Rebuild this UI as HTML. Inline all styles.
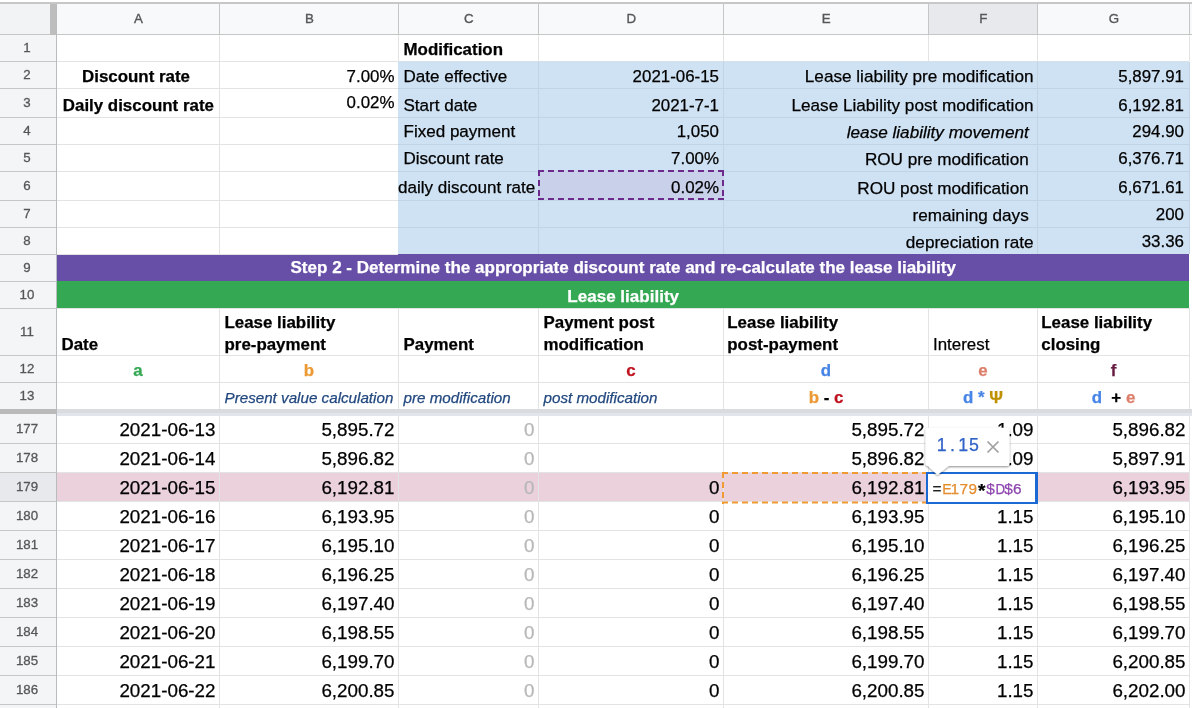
<!DOCTYPE html>
<html><head><meta charset="utf-8"><style>
html,body{margin:0;padding:0;}
body{width:1192px;height:708px;overflow:hidden;position:relative;background:#fff;font-family:"Liberation Sans", sans-serif;}
.t{position:absolute;white-space:pre;-webkit-text-stroke:0.25px currentColor;}
</style></head><body><div style="position:absolute;left:0;top:0;width:1192px;height:708px;overflow:hidden;will-change:transform;">
<div style="position:absolute;left:0px;top:2px;width:1192px;height:2px;background:#c7c7c7;"></div>
<div style="position:absolute;left:0px;top:4px;width:1192px;height:30px;background:#f8f9fa;"></div>
<div style="position:absolute;left:928px;top:4px;width:109px;height:30px;background:#e7e9ec;"></div>
<div style="position:absolute;left:0px;top:4px;width:50px;height:30px;background:#f2f3f4;"></div>
<div style="position:absolute;left:0px;top:35px;width:56px;height:673px;background:#f4f5f6;"></div>
<div style="position:absolute;left:0px;top:472px;width:56px;height:29px;background:#e7e9ec;"></div>
<div style="position:absolute;left:398px;top:62px;width:791px;height:192px;background:#cfe2f3;"></div>
<div style="position:absolute;left:57px;top:254px;width:1132px;height:27px;background:#674ea7;"></div>
<div style="position:absolute;left:57px;top:281px;width:1132px;height:27px;background:#34a853;"></div>
<div style="position:absolute;left:57px;top:472px;width:1132px;height:29px;background:#ead1dc;"></div>
<div style="position:absolute;left:57px;top:61px;width:341px;height:1px;background:#e2e3e3;"></div>
<div style="position:absolute;left:398px;top:61px;width:791px;height:1px;background:#d5dfe8;"></div>
<div style="position:absolute;left:57px;top:88px;width:341px;height:1px;background:#e2e3e3;"></div>
<div style="position:absolute;left:398px;top:88px;width:791px;height:1px;background:#c2d3e3;"></div>
<div style="position:absolute;left:57px;top:117px;width:341px;height:1px;background:#e2e3e3;"></div>
<div style="position:absolute;left:398px;top:117px;width:791px;height:1px;background:#c2d3e3;"></div>
<div style="position:absolute;left:57px;top:144px;width:341px;height:1px;background:#e2e3e3;"></div>
<div style="position:absolute;left:398px;top:144px;width:791px;height:1px;background:#c2d3e3;"></div>
<div style="position:absolute;left:57px;top:171px;width:341px;height:1px;background:#e2e3e3;"></div>
<div style="position:absolute;left:398px;top:171px;width:791px;height:1px;background:#c2d3e3;"></div>
<div style="position:absolute;left:57px;top:200px;width:341px;height:1px;background:#e2e3e3;"></div>
<div style="position:absolute;left:398px;top:200px;width:791px;height:1px;background:#c2d3e3;"></div>
<div style="position:absolute;left:57px;top:227px;width:341px;height:1px;background:#e2e3e3;"></div>
<div style="position:absolute;left:398px;top:227px;width:791px;height:1px;background:#c2d3e3;"></div>
<div style="position:absolute;left:57px;top:308px;width:1132px;height:1px;background:#e2e3e3;"></div>
<div style="position:absolute;left:57px;top:355px;width:1132px;height:1px;background:#e2e3e3;"></div>
<div style="position:absolute;left:57px;top:382px;width:1132px;height:1px;background:#e2e3e3;"></div>
<div style="position:absolute;left:57px;top:409px;width:1132px;height:1px;background:#e2e3e3;"></div>
<div style="position:absolute;left:57px;top:443px;width:1132px;height:1px;background:#e2e3e3;"></div>
<div style="position:absolute;left:57px;top:472px;width:1132px;height:1px;background:#e2e3e3;"></div>
<div style="position:absolute;left:57px;top:501px;width:1132px;height:1px;background:#e2e3e3;"></div>
<div style="position:absolute;left:57px;top:530px;width:1132px;height:1px;background:#e2e3e3;"></div>
<div style="position:absolute;left:57px;top:559px;width:1132px;height:1px;background:#e2e3e3;"></div>
<div style="position:absolute;left:57px;top:588px;width:1132px;height:1px;background:#e2e3e3;"></div>
<div style="position:absolute;left:57px;top:617px;width:1132px;height:1px;background:#e2e3e3;"></div>
<div style="position:absolute;left:57px;top:646px;width:1132px;height:1px;background:#e2e3e3;"></div>
<div style="position:absolute;left:57px;top:675px;width:1132px;height:1px;background:#e2e3e3;"></div>
<div style="position:absolute;left:57px;top:704px;width:1132px;height:1px;background:#e2e3e3;"></div>
<div style="position:absolute;left:57px;top:254px;width:341px;height:1px;background:#e2e3e3;"></div>
<div style="position:absolute;left:219px;top:35px;width:1px;height:219px;background:#e2e3e3;"></div>
<div style="position:absolute;left:219px;top:308px;width:1px;height:101px;background:#e2e3e3;"></div>
<div style="position:absolute;left:219px;top:414px;width:1px;height:294px;background:#e2e3e3;"></div>
<div style="position:absolute;left:398px;top:35px;width:1px;height:27px;background:#e2e3e3;"></div>
<div style="position:absolute;left:398px;top:308px;width:1px;height:101px;background:#e2e3e3;"></div>
<div style="position:absolute;left:398px;top:414px;width:1px;height:294px;background:#e2e3e3;"></div>
<div style="position:absolute;left:538px;top:35px;width:1px;height:26px;background:#e2e3e3;"></div>
<div style="position:absolute;left:538px;top:62px;width:1px;height:192px;background:#c2d3e3;"></div>
<div style="position:absolute;left:538px;top:308px;width:1px;height:101px;background:#e2e3e3;"></div>
<div style="position:absolute;left:538px;top:414px;width:1px;height:294px;background:#e2e3e3;"></div>
<div style="position:absolute;left:723px;top:35px;width:1px;height:26px;background:#e2e3e3;"></div>
<div style="position:absolute;left:723px;top:62px;width:1px;height:192px;background:#c2d3e3;"></div>
<div style="position:absolute;left:723px;top:308px;width:1px;height:101px;background:#e2e3e3;"></div>
<div style="position:absolute;left:723px;top:414px;width:1px;height:294px;background:#e2e3e3;"></div>
<div style="position:absolute;left:928px;top:35px;width:1px;height:26px;background:#e2e3e3;"></div>
<div style="position:absolute;left:928px;top:308px;width:1px;height:101px;background:#e2e3e3;"></div>
<div style="position:absolute;left:928px;top:414px;width:1px;height:294px;background:#e2e3e3;"></div>
<div style="position:absolute;left:1037px;top:35px;width:1px;height:26px;background:#e2e3e3;"></div>
<div style="position:absolute;left:1037px;top:62px;width:1px;height:192px;background:#c2d3e3;"></div>
<div style="position:absolute;left:1037px;top:308px;width:1px;height:101px;background:#e2e3e3;"></div>
<div style="position:absolute;left:1037px;top:414px;width:1px;height:294px;background:#e2e3e3;"></div>
<div style="position:absolute;left:1189px;top:35px;width:1px;height:26px;background:#e2e3e3;"></div>
<div style="position:absolute;left:1189px;top:62px;width:1px;height:192px;background:#c2d3e3;"></div>
<div style="position:absolute;left:1189px;top:308px;width:1px;height:101px;background:#e2e3e3;"></div>
<div style="position:absolute;left:1189px;top:414px;width:1px;height:294px;background:#e2e3e3;"></div>
<div style="position:absolute;left:0px;top:34px;width:1192px;height:1px;background:#c4c7c5;"></div>
<div style="position:absolute;left:219px;top:4px;width:1px;height:30px;background:#c4c7c5;"></div>
<div style="position:absolute;left:398px;top:4px;width:1px;height:30px;background:#c4c7c5;"></div>
<div style="position:absolute;left:538px;top:4px;width:1px;height:30px;background:#c4c7c5;"></div>
<div style="position:absolute;left:723px;top:4px;width:1px;height:30px;background:#c4c7c5;"></div>
<div style="position:absolute;left:928px;top:4px;width:1px;height:30px;background:#c4c7c5;"></div>
<div style="position:absolute;left:1037px;top:4px;width:1px;height:30px;background:#c4c7c5;"></div>
<div style="position:absolute;left:1189px;top:4px;width:1px;height:30px;background:#c4c7c5;"></div>
<div style="position:absolute;left:0px;top:61px;width:56px;height:1px;background:#c4c7c5;"></div>
<div style="position:absolute;left:0px;top:88px;width:56px;height:1px;background:#c4c7c5;"></div>
<div style="position:absolute;left:0px;top:117px;width:56px;height:1px;background:#c4c7c5;"></div>
<div style="position:absolute;left:0px;top:144px;width:56px;height:1px;background:#c4c7c5;"></div>
<div style="position:absolute;left:0px;top:171px;width:56px;height:1px;background:#c4c7c5;"></div>
<div style="position:absolute;left:0px;top:200px;width:56px;height:1px;background:#c4c7c5;"></div>
<div style="position:absolute;left:0px;top:227px;width:56px;height:1px;background:#c4c7c5;"></div>
<div style="position:absolute;left:0px;top:254px;width:56px;height:1px;background:#c4c7c5;"></div>
<div style="position:absolute;left:0px;top:281px;width:56px;height:1px;background:#c4c7c5;"></div>
<div style="position:absolute;left:0px;top:308px;width:56px;height:1px;background:#c4c7c5;"></div>
<div style="position:absolute;left:0px;top:355px;width:56px;height:1px;background:#c4c7c5;"></div>
<div style="position:absolute;left:0px;top:382px;width:56px;height:1px;background:#c4c7c5;"></div>
<div style="position:absolute;left:0px;top:409px;width:56px;height:1px;background:#c4c7c5;"></div>
<div style="position:absolute;left:0px;top:443px;width:56px;height:1px;background:#c4c7c5;"></div>
<div style="position:absolute;left:0px;top:472px;width:56px;height:1px;background:#c4c7c5;"></div>
<div style="position:absolute;left:0px;top:501px;width:56px;height:1px;background:#c4c7c5;"></div>
<div style="position:absolute;left:0px;top:530px;width:56px;height:1px;background:#c4c7c5;"></div>
<div style="position:absolute;left:0px;top:559px;width:56px;height:1px;background:#c4c7c5;"></div>
<div style="position:absolute;left:0px;top:588px;width:56px;height:1px;background:#c4c7c5;"></div>
<div style="position:absolute;left:0px;top:617px;width:56px;height:1px;background:#c4c7c5;"></div>
<div style="position:absolute;left:0px;top:646px;width:56px;height:1px;background:#c4c7c5;"></div>
<div style="position:absolute;left:0px;top:675px;width:56px;height:1px;background:#c4c7c5;"></div>
<div style="position:absolute;left:0px;top:704px;width:56px;height:1px;background:#c4c7c5;"></div>
<div style="position:absolute;left:56px;top:4px;width:1px;height:704px;background:#b9bcbf;"></div>
<div style="position:absolute;left:50px;top:4px;width:6px;height:31px;background:#bdbdbd;"></div>
<div style="position:absolute;left:0px;top:409px;width:56px;height:5px;background:#bababa;"></div>
<div style="position:absolute;left:57px;top:409px;width:1135px;height:4px;background:#d9dbde;"></div>
<div style="position:absolute;left:57px;top:413px;width:1135px;height:3px;background:#e2e5eb;"></div>
<div class="t" style="left:-261.7px;width:800px;text-align:center;top:5.89px;line-height:26.6px;font-size:13.3px;font-weight:normal;font-style:normal;color:#555759;-webkit-text-stroke:0.35px #555759;">A</div>
<div class="t" style="left:-90.7px;width:800px;text-align:center;top:5.89px;line-height:26.6px;font-size:13.3px;font-weight:normal;font-style:normal;color:#555759;-webkit-text-stroke:0.35px #555759;">B</div>
<div class="t" style="left:68.8px;width:800px;text-align:center;top:5.89px;line-height:26.6px;font-size:13.3px;font-weight:normal;font-style:normal;color:#555759;-webkit-text-stroke:0.35px #555759;">C</div>
<div class="t" style="left:231.3px;width:800px;text-align:center;top:5.89px;line-height:26.6px;font-size:13.3px;font-weight:normal;font-style:normal;color:#555759;-webkit-text-stroke:0.35px #555759;">D</div>
<div class="t" style="left:426.3px;width:800px;text-align:center;top:5.89px;line-height:26.6px;font-size:13.3px;font-weight:normal;font-style:normal;color:#555759;-webkit-text-stroke:0.35px #555759;">E</div>
<div class="t" style="left:583.3px;width:800px;text-align:center;top:5.89px;line-height:26.6px;font-size:13.3px;font-weight:normal;font-style:normal;color:#555759;-webkit-text-stroke:0.35px #555759;">F</div>
<div class="t" style="left:713.8px;width:800px;text-align:center;top:5.89px;line-height:26.6px;font-size:13.3px;font-weight:normal;font-style:normal;color:#555759;-webkit-text-stroke:0.35px #555759;">G</div>
<div class="t" style="left:-373px;width:800px;text-align:center;top:35.19px;line-height:26.6px;font-size:13.3px;font-weight:normal;font-style:normal;color:#555759;-webkit-text-stroke:0.3px #555759;">1</div>
<div class="t" style="left:-373px;width:800px;text-align:center;top:62.19px;line-height:26.6px;font-size:13.3px;font-weight:normal;font-style:normal;color:#555759;-webkit-text-stroke:0.3px #555759;">2</div>
<div class="t" style="left:-373px;width:800px;text-align:center;top:90.19px;line-height:26.6px;font-size:13.3px;font-weight:normal;font-style:normal;color:#555759;-webkit-text-stroke:0.3px #555759;">3</div>
<div class="t" style="left:-373px;width:800px;text-align:center;top:118.19px;line-height:26.6px;font-size:13.3px;font-weight:normal;font-style:normal;color:#555759;-webkit-text-stroke:0.3px #555759;">4</div>
<div class="t" style="left:-373px;width:800px;text-align:center;top:145.19px;line-height:26.6px;font-size:13.3px;font-weight:normal;font-style:normal;color:#555759;-webkit-text-stroke:0.3px #555759;">5</div>
<div class="t" style="left:-373px;width:800px;text-align:center;top:173.19px;line-height:26.6px;font-size:13.3px;font-weight:normal;font-style:normal;color:#555759;-webkit-text-stroke:0.3px #555759;">6</div>
<div class="t" style="left:-373px;width:800px;text-align:center;top:201.19px;line-height:26.6px;font-size:13.3px;font-weight:normal;font-style:normal;color:#555759;-webkit-text-stroke:0.3px #555759;">7</div>
<div class="t" style="left:-373px;width:800px;text-align:center;top:228.19px;line-height:26.6px;font-size:13.3px;font-weight:normal;font-style:normal;color:#555759;-webkit-text-stroke:0.3px #555759;">8</div>
<div class="t" style="left:-373px;width:800px;text-align:center;top:254.69px;line-height:26.6px;font-size:13.3px;font-weight:normal;font-style:normal;color:#555759;-webkit-text-stroke:0.3px #555759;">9</div>
<div class="t" style="left:-373px;width:800px;text-align:center;top:281.69px;line-height:26.6px;font-size:13.3px;font-weight:normal;font-style:normal;color:#555759;-webkit-text-stroke:0.3px #555759;">10</div>
<div class="t" style="left:-373px;width:800px;text-align:center;top:319.19px;line-height:26.6px;font-size:13.3px;font-weight:normal;font-style:normal;color:#555759;-webkit-text-stroke:0.3px #555759;">11</div>
<div class="t" style="left:-373px;width:800px;text-align:center;top:356.19px;line-height:26.6px;font-size:13.3px;font-weight:normal;font-style:normal;color:#555759;-webkit-text-stroke:0.3px #555759;">12</div>
<div class="t" style="left:-373px;width:800px;text-align:center;top:383.19px;line-height:26.6px;font-size:13.3px;font-weight:normal;font-style:normal;color:#555759;-webkit-text-stroke:0.3px #555759;">13</div>
<div class="t" style="left:-373px;width:800px;text-align:center;top:415.69px;line-height:26.6px;font-size:13.3px;font-weight:normal;font-style:normal;color:#555759;-webkit-text-stroke:0.3px #555759;">177</div>
<div class="t" style="left:-373px;width:800px;text-align:center;top:444.69px;line-height:26.6px;font-size:13.3px;font-weight:normal;font-style:normal;color:#555759;-webkit-text-stroke:0.3px #555759;">178</div>
<div class="t" style="left:-373px;width:800px;text-align:center;top:473.69px;line-height:26.6px;font-size:13.3px;font-weight:normal;font-style:normal;color:#555759;-webkit-text-stroke:0.3px #555759;">179</div>
<div class="t" style="left:-373px;width:800px;text-align:center;top:502.69px;line-height:26.6px;font-size:13.3px;font-weight:normal;font-style:normal;color:#555759;-webkit-text-stroke:0.3px #555759;">180</div>
<div class="t" style="left:-373px;width:800px;text-align:center;top:531.69px;line-height:26.6px;font-size:13.3px;font-weight:normal;font-style:normal;color:#555759;-webkit-text-stroke:0.3px #555759;">181</div>
<div class="t" style="left:-373px;width:800px;text-align:center;top:560.69px;line-height:26.6px;font-size:13.3px;font-weight:normal;font-style:normal;color:#555759;-webkit-text-stroke:0.3px #555759;">182</div>
<div class="t" style="left:-373px;width:800px;text-align:center;top:589.69px;line-height:26.6px;font-size:13.3px;font-weight:normal;font-style:normal;color:#555759;-webkit-text-stroke:0.3px #555759;">183</div>
<div class="t" style="left:-373px;width:800px;text-align:center;top:618.69px;line-height:26.6px;font-size:13.3px;font-weight:normal;font-style:normal;color:#555759;-webkit-text-stroke:0.3px #555759;">184</div>
<div class="t" style="left:-373px;width:800px;text-align:center;top:647.69px;line-height:26.6px;font-size:13.3px;font-weight:normal;font-style:normal;color:#555759;-webkit-text-stroke:0.3px #555759;">185</div>
<div class="t" style="left:-373px;width:800px;text-align:center;top:676.69px;line-height:26.6px;font-size:13.3px;font-weight:normal;font-style:normal;color:#555759;-webkit-text-stroke:0.3px #555759;">186</div>
<div class="t" style="left:403.5px;top:32.74px;line-height:33.8px;font-size:16.9px;font-weight:bold;font-style:normal;color:#000;">Modification</div>
<div class="t" style="left:82px;top:59.74px;line-height:33.8px;font-size:16.9px;font-weight:bold;font-style:normal;color:#000;">Discount rate</div>
<div class="t" style="left:62.8px;top:88.74px;line-height:33.8px;font-size:16.9px;font-weight:bold;font-style:normal;color:#000;">Daily discount rate</div>
<div class="t" style="right:797.5px;top:59.74px;line-height:33.8px;font-size:16.9px;font-weight:normal;font-style:normal;color:#000;">7.00%</div>
<div class="t" style="right:797.5px;top:86.24px;line-height:33.8px;font-size:16.9px;font-weight:normal;font-style:normal;color:#000;">0.02%</div>
<div class="t" style="left:403.5px;top:59.54px;line-height:34.1px;font-size:17.05px;font-weight:normal;font-style:normal;color:#000;">Date effective</div>
<div class="t" style="left:403.5px;top:88.54px;line-height:34.1px;font-size:17.05px;font-weight:normal;font-style:normal;color:#000;">Start date</div>
<div class="t" style="left:403.5px;top:114.74px;line-height:34.1px;font-size:17.05px;font-weight:normal;font-style:normal;color:#000;">Fixed payment</div>
<div class="t" style="left:403.5px;top:141.74px;line-height:34.1px;font-size:17.05px;font-weight:normal;font-style:normal;color:#000;">Discount rate</div>
<div class="t" style="left:398px;top:170.74px;line-height:34.1px;font-size:17.05px;font-weight:normal;font-style:normal;color:#000;">daily discount rate</div>
<div class="t" style="right:473px;top:59.74px;line-height:33.8px;font-size:16.9px;font-weight:normal;font-style:normal;color:#000;">2021-06-15</div>
<div class="t" style="right:473px;top:88.74px;line-height:33.8px;font-size:16.9px;font-weight:normal;font-style:normal;color:#000;">2021-7-1</div>
<div class="t" style="right:473px;top:114.94px;line-height:33.8px;font-size:16.9px;font-weight:normal;font-style:normal;color:#000;">1,050</div>
<div class="t" style="right:473px;top:141.94px;line-height:33.8px;font-size:16.9px;font-weight:normal;font-style:normal;color:#000;">7.00%</div>
<div class="t" style="right:158.5px;top:59.41px;line-height:34.3px;font-size:17.15px;font-weight:normal;font-style:normal;color:#000;">Lease liability pre modification</div>
<div class="t" style="right:158.5px;top:88.41px;line-height:34.3px;font-size:17.15px;font-weight:normal;font-style:normal;color:#000;">Lease Liability post modification</div>
<div class="t" style="right:158.5px;top:114.61px;line-height:34.3px;font-size:17.15px;font-weight:normal;font-style:italic;color:#000;">lease liability movement </div>
<div class="t" style="right:158.5px;top:141.61px;line-height:34.3px;font-size:17.15px;font-weight:normal;font-style:normal;color:#000;">ROU pre modification </div>
<div class="t" style="right:158.5px;top:170.61px;line-height:34.3px;font-size:17.15px;font-weight:normal;font-style:normal;color:#000;">ROU post modification </div>
<div class="t" style="right:158.5px;top:197.61px;line-height:34.3px;font-size:17.15px;font-weight:normal;font-style:normal;color:#000;">remaining days </div>
<div class="t" style="right:158.5px;top:224.61px;line-height:34.3px;font-size:17.15px;font-weight:normal;font-style:normal;color:#000;">depreciation rate</div>
<div class="t" style="right:8px;top:59.74px;line-height:33.8px;font-size:16.9px;font-weight:normal;font-style:normal;color:#000;">5,897.91</div>
<div class="t" style="right:8px;top:88.74px;line-height:33.8px;font-size:16.9px;font-weight:normal;font-style:normal;color:#000;">6,192.81</div>
<div class="t" style="right:8px;top:114.94px;line-height:33.8px;font-size:16.9px;font-weight:normal;font-style:normal;color:#000;">294.90</div>
<div class="t" style="right:8px;top:141.94px;line-height:33.8px;font-size:16.9px;font-weight:normal;font-style:normal;color:#000;">6,376.71</div>
<div class="t" style="right:8px;top:170.94px;line-height:33.8px;font-size:16.9px;font-weight:normal;font-style:normal;color:#000;">6,671.61</div>
<div class="t" style="right:8px;top:197.94px;line-height:33.8px;font-size:16.9px;font-weight:normal;font-style:normal;color:#000;">200</div>
<div class="t" style="right:8px;top:224.94px;line-height:33.8px;font-size:16.9px;font-weight:normal;font-style:normal;color:#000;">33.36</div>
<div style="position:absolute;left:538px;top:170px;width:186px;height:30px;background:#c9d0ea;"></div>
<div class="t" style="right:473px;top:170.94px;line-height:33.8px;font-size:16.9px;font-weight:normal;font-style:normal;color:#000;">0.02%</div>
<svg style="position:absolute;left:538px;top:170px" width="186" height="30" viewBox="0 0 186 30">
<g stroke="#6b2a8c" stroke-width="2" fill="none">
<path d="M0 1 H186" stroke-dasharray="6 4"/><path d="M0 29 H186" stroke-dasharray="6 4"/>
<path d="M1 0 V30" stroke-dasharray="6 4"/><path d="M185 0 V30" stroke-dasharray="6 4"/>
</g></svg>
<div class="t" style="left:223.2px;width:800px;text-align:center;top:251.34px;line-height:34.1px;font-size:17.05px;font-weight:bold;font-style:normal;color:#fff;">Step 2 - Determine the appropriate discount rate and re-calculate the lease liability</div>
<div class="t" style="left:223.2px;width:800px;text-align:center;top:280.04px;line-height:34.1px;font-size:17.05px;font-weight:bold;font-style:normal;color:#fff;">Lease liability</div>
<div class="t" style="left:61.5px;top:327.84px;line-height:33.8px;font-size:16.9px;font-weight:bold;font-style:normal;color:#000;">Date</div>
<div class="t" style="left:224.5px;top:306.14px;line-height:33.8px;font-size:16.9px;font-weight:bold;font-style:normal;color:#000;">Lease liability</div>
<div class="t" style="left:224.5px;top:327.84px;line-height:33.8px;font-size:16.9px;font-weight:bold;font-style:normal;color:#000;">pre-payment</div>
<div class="t" style="left:403.5px;top:327.84px;line-height:33.8px;font-size:16.9px;font-weight:bold;font-style:normal;color:#000;">Payment</div>
<div class="t" style="left:543.5px;top:306.14px;line-height:33.8px;font-size:16.9px;font-weight:bold;font-style:normal;color:#000;">Payment post</div>
<div class="t" style="left:543.5px;top:327.84px;line-height:33.8px;font-size:16.9px;font-weight:bold;font-style:normal;color:#000;">modification</div>
<div class="t" style="left:727.3px;top:306.14px;line-height:33.8px;font-size:16.9px;font-weight:bold;font-style:normal;color:#000;">Lease liability</div>
<div class="t" style="left:727.3px;top:327.84px;line-height:33.8px;font-size:16.9px;font-weight:bold;font-style:normal;color:#000;">post-payment</div>
<div class="t" style="left:933px;top:327.84px;line-height:33.8px;font-size:16.9px;font-weight:normal;font-style:normal;color:#000;">Interest</div>
<div class="t" style="left:1041.3px;top:306.14px;line-height:33.8px;font-size:16.9px;font-weight:bold;font-style:normal;color:#000;">Lease liability</div>
<div class="t" style="left:1041.3px;top:327.84px;line-height:33.8px;font-size:16.9px;font-weight:bold;font-style:normal;color:#000;">closing</div>
<div class="t" style="left:-262.0px;width:800px;text-align:center;top:354.04px;line-height:33.8px;font-size:16.9px;font-weight:bold;font-style:normal;color:#34a853;">a</div>
<div class="t" style="left:-91.0px;width:800px;text-align:center;top:354.04px;line-height:33.8px;font-size:16.9px;font-weight:bold;font-style:normal;color:#ec9a35;">b</div>
<div class="t" style="left:231.0px;width:800px;text-align:center;top:354.04px;line-height:33.8px;font-size:16.9px;font-weight:bold;font-style:normal;color:#c0111f;">c</div>
<div class="t" style="left:426.0px;width:800px;text-align:center;top:354.04px;line-height:33.8px;font-size:16.9px;font-weight:bold;font-style:normal;color:#4684e6;">d</div>
<div class="t" style="left:583.0px;width:800px;text-align:center;top:354.04px;line-height:33.8px;font-size:16.9px;font-weight:bold;font-style:normal;color:#dd7e6b;">e</div>
<div class="t" style="left:713.5px;width:800px;text-align:center;top:354.04px;line-height:33.8px;font-size:16.9px;font-weight:bold;font-style:normal;color:#66193f;">f</div>
<div class="t" style="left:224.5px;top:383.33px;line-height:30.4px;font-size:15.2px;font-weight:normal;font-style:italic;color:#22487f;">Present value calculation</div>
<div class="t" style="left:403.5px;top:383.33px;line-height:30.4px;font-size:15.2px;font-weight:normal;font-style:italic;color:#22487f;">pre modification</div>
<div class="t" style="left:543.5px;top:383.33px;line-height:30.4px;font-size:15.2px;font-weight:normal;font-style:italic;color:#22487f;">post modification</div>
<div class="t" style="left:426.0px;width:800px;text-align:center;top:381.04px;line-height:33.8px;font-size:16.9px;font-weight:bold;font-style:normal;color:#000;"><span style="color:#ec9a35">b</span> - <span style="color:#c0111f">c</span></div>
<div class="t" style="left:583.0px;width:800px;text-align:center;top:381.04px;line-height:33.8px;font-size:16.9px;font-weight:bold;font-style:normal;color:#000;"><span style="color:#4684e6">d * </span><span style="color:#bf9000">&Psi;</span></div>
<div class="t" style="left:713.5px;width:800px;text-align:center;top:381.04px;line-height:33.8px;font-size:16.9px;font-weight:bold;font-style:normal;color:#000;"><span style="color:#4684e6">d</span>  + <span style="color:#dd7e6b">e</span></div>
<div class="t" style="right:976.5px;top:411.39px;line-height:37.6px;font-size:18.8px;font-weight:normal;font-style:normal;color:#000;">2021-06-13</div>
<div class="t" style="right:797.5px;top:411.39px;line-height:37.6px;font-size:18.8px;font-weight:normal;font-style:normal;color:#000;">5,895.72</div>
<div class="t" style="right:657.5px;top:411.39px;line-height:37.6px;font-size:18.8px;font-weight:normal;font-style:normal;color:#b7b7b7;">0</div>
<div class="t" style="right:267.5px;top:411.39px;line-height:37.6px;font-size:18.8px;font-weight:normal;font-style:normal;color:#000;">5,895.72</div>
<div class="t" style="right:158.5px;top:411.39px;line-height:37.6px;font-size:18.8px;font-weight:normal;font-style:normal;color:#000;">1.09</div>
<div class="t" style="right:6.5px;top:411.39px;line-height:37.6px;font-size:18.8px;font-weight:normal;font-style:normal;color:#000;">5,896.82</div>
<div class="t" style="right:976.5px;top:440.39px;line-height:37.6px;font-size:18.8px;font-weight:normal;font-style:normal;color:#000;">2021-06-14</div>
<div class="t" style="right:797.5px;top:440.39px;line-height:37.6px;font-size:18.8px;font-weight:normal;font-style:normal;color:#000;">5,896.82</div>
<div class="t" style="right:657.5px;top:440.39px;line-height:37.6px;font-size:18.8px;font-weight:normal;font-style:normal;color:#b7b7b7;">0</div>
<div class="t" style="right:267.5px;top:440.39px;line-height:37.6px;font-size:18.8px;font-weight:normal;font-style:normal;color:#000;">5,896.82</div>
<div class="t" style="right:158.5px;top:440.39px;line-height:37.6px;font-size:18.8px;font-weight:normal;font-style:normal;color:#000;">1.09</div>
<div class="t" style="right:6.5px;top:440.39px;line-height:37.6px;font-size:18.8px;font-weight:normal;font-style:normal;color:#000;">5,897.91</div>
<div class="t" style="right:976.5px;top:469.39px;line-height:37.6px;font-size:18.8px;font-weight:normal;font-style:normal;color:#000;">2021-06-15</div>
<div class="t" style="right:797.5px;top:469.39px;line-height:37.6px;font-size:18.8px;font-weight:normal;font-style:normal;color:#000;">6,192.81</div>
<div class="t" style="right:657.5px;top:469.39px;line-height:37.6px;font-size:18.8px;font-weight:normal;font-style:normal;color:#b7b7b7;">0</div>
<div class="t" style="right:472.5px;top:469.39px;line-height:37.6px;font-size:18.8px;font-weight:normal;font-style:normal;color:#000;">0</div>
<div class="t" style="right:267.5px;top:469.39px;line-height:37.6px;font-size:18.8px;font-weight:normal;font-style:normal;color:#000;">6,192.81</div>
<div class="t" style="right:6.5px;top:469.39px;line-height:37.6px;font-size:18.8px;font-weight:normal;font-style:normal;color:#000;">6,193.95</div>
<div class="t" style="right:976.5px;top:498.39px;line-height:37.6px;font-size:18.8px;font-weight:normal;font-style:normal;color:#000;">2021-06-16</div>
<div class="t" style="right:797.5px;top:498.39px;line-height:37.6px;font-size:18.8px;font-weight:normal;font-style:normal;color:#000;">6,193.95</div>
<div class="t" style="right:657.5px;top:498.39px;line-height:37.6px;font-size:18.8px;font-weight:normal;font-style:normal;color:#b7b7b7;">0</div>
<div class="t" style="right:472.5px;top:498.39px;line-height:37.6px;font-size:18.8px;font-weight:normal;font-style:normal;color:#000;">0</div>
<div class="t" style="right:267.5px;top:498.39px;line-height:37.6px;font-size:18.8px;font-weight:normal;font-style:normal;color:#000;">6,193.95</div>
<div class="t" style="right:158.5px;top:498.39px;line-height:37.6px;font-size:18.8px;font-weight:normal;font-style:normal;color:#000;">1.15</div>
<div class="t" style="right:6.5px;top:498.39px;line-height:37.6px;font-size:18.8px;font-weight:normal;font-style:normal;color:#000;">6,195.10</div>
<div class="t" style="right:976.5px;top:527.39px;line-height:37.6px;font-size:18.8px;font-weight:normal;font-style:normal;color:#000;">2021-06-17</div>
<div class="t" style="right:797.5px;top:527.39px;line-height:37.6px;font-size:18.8px;font-weight:normal;font-style:normal;color:#000;">6,195.10</div>
<div class="t" style="right:657.5px;top:527.39px;line-height:37.6px;font-size:18.8px;font-weight:normal;font-style:normal;color:#b7b7b7;">0</div>
<div class="t" style="right:472.5px;top:527.39px;line-height:37.6px;font-size:18.8px;font-weight:normal;font-style:normal;color:#000;">0</div>
<div class="t" style="right:267.5px;top:527.39px;line-height:37.6px;font-size:18.8px;font-weight:normal;font-style:normal;color:#000;">6,195.10</div>
<div class="t" style="right:158.5px;top:527.39px;line-height:37.6px;font-size:18.8px;font-weight:normal;font-style:normal;color:#000;">1.15</div>
<div class="t" style="right:6.5px;top:527.39px;line-height:37.6px;font-size:18.8px;font-weight:normal;font-style:normal;color:#000;">6,196.25</div>
<div class="t" style="right:976.5px;top:556.39px;line-height:37.6px;font-size:18.8px;font-weight:normal;font-style:normal;color:#000;">2021-06-18</div>
<div class="t" style="right:797.5px;top:556.39px;line-height:37.6px;font-size:18.8px;font-weight:normal;font-style:normal;color:#000;">6,196.25</div>
<div class="t" style="right:657.5px;top:556.39px;line-height:37.6px;font-size:18.8px;font-weight:normal;font-style:normal;color:#b7b7b7;">0</div>
<div class="t" style="right:472.5px;top:556.39px;line-height:37.6px;font-size:18.8px;font-weight:normal;font-style:normal;color:#000;">0</div>
<div class="t" style="right:267.5px;top:556.39px;line-height:37.6px;font-size:18.8px;font-weight:normal;font-style:normal;color:#000;">6,196.25</div>
<div class="t" style="right:158.5px;top:556.39px;line-height:37.6px;font-size:18.8px;font-weight:normal;font-style:normal;color:#000;">1.15</div>
<div class="t" style="right:6.5px;top:556.39px;line-height:37.6px;font-size:18.8px;font-weight:normal;font-style:normal;color:#000;">6,197.40</div>
<div class="t" style="right:976.5px;top:585.39px;line-height:37.6px;font-size:18.8px;font-weight:normal;font-style:normal;color:#000;">2021-06-19</div>
<div class="t" style="right:797.5px;top:585.39px;line-height:37.6px;font-size:18.8px;font-weight:normal;font-style:normal;color:#000;">6,197.40</div>
<div class="t" style="right:657.5px;top:585.39px;line-height:37.6px;font-size:18.8px;font-weight:normal;font-style:normal;color:#b7b7b7;">0</div>
<div class="t" style="right:472.5px;top:585.39px;line-height:37.6px;font-size:18.8px;font-weight:normal;font-style:normal;color:#000;">0</div>
<div class="t" style="right:267.5px;top:585.39px;line-height:37.6px;font-size:18.8px;font-weight:normal;font-style:normal;color:#000;">6,197.40</div>
<div class="t" style="right:158.5px;top:585.39px;line-height:37.6px;font-size:18.8px;font-weight:normal;font-style:normal;color:#000;">1.15</div>
<div class="t" style="right:6.5px;top:585.39px;line-height:37.6px;font-size:18.8px;font-weight:normal;font-style:normal;color:#000;">6,198.55</div>
<div class="t" style="right:976.5px;top:614.39px;line-height:37.6px;font-size:18.8px;font-weight:normal;font-style:normal;color:#000;">2021-06-20</div>
<div class="t" style="right:797.5px;top:614.39px;line-height:37.6px;font-size:18.8px;font-weight:normal;font-style:normal;color:#000;">6,198.55</div>
<div class="t" style="right:657.5px;top:614.39px;line-height:37.6px;font-size:18.8px;font-weight:normal;font-style:normal;color:#b7b7b7;">0</div>
<div class="t" style="right:472.5px;top:614.39px;line-height:37.6px;font-size:18.8px;font-weight:normal;font-style:normal;color:#000;">0</div>
<div class="t" style="right:267.5px;top:614.39px;line-height:37.6px;font-size:18.8px;font-weight:normal;font-style:normal;color:#000;">6,198.55</div>
<div class="t" style="right:158.5px;top:614.39px;line-height:37.6px;font-size:18.8px;font-weight:normal;font-style:normal;color:#000;">1.15</div>
<div class="t" style="right:6.5px;top:614.39px;line-height:37.6px;font-size:18.8px;font-weight:normal;font-style:normal;color:#000;">6,199.70</div>
<div class="t" style="right:976.5px;top:643.39px;line-height:37.6px;font-size:18.8px;font-weight:normal;font-style:normal;color:#000;">2021-06-21</div>
<div class="t" style="right:797.5px;top:643.39px;line-height:37.6px;font-size:18.8px;font-weight:normal;font-style:normal;color:#000;">6,199.70</div>
<div class="t" style="right:657.5px;top:643.39px;line-height:37.6px;font-size:18.8px;font-weight:normal;font-style:normal;color:#b7b7b7;">0</div>
<div class="t" style="right:472.5px;top:643.39px;line-height:37.6px;font-size:18.8px;font-weight:normal;font-style:normal;color:#000;">0</div>
<div class="t" style="right:267.5px;top:643.39px;line-height:37.6px;font-size:18.8px;font-weight:normal;font-style:normal;color:#000;">6,199.70</div>
<div class="t" style="right:158.5px;top:643.39px;line-height:37.6px;font-size:18.8px;font-weight:normal;font-style:normal;color:#000;">1.15</div>
<div class="t" style="right:6.5px;top:643.39px;line-height:37.6px;font-size:18.8px;font-weight:normal;font-style:normal;color:#000;">6,200.85</div>
<div class="t" style="right:976.5px;top:672.39px;line-height:37.6px;font-size:18.8px;font-weight:normal;font-style:normal;color:#000;">2021-06-22</div>
<div class="t" style="right:797.5px;top:672.39px;line-height:37.6px;font-size:18.8px;font-weight:normal;font-style:normal;color:#000;">6,200.85</div>
<div class="t" style="right:657.5px;top:672.39px;line-height:37.6px;font-size:18.8px;font-weight:normal;font-style:normal;color:#b7b7b7;">0</div>
<div class="t" style="right:472.5px;top:672.39px;line-height:37.6px;font-size:18.8px;font-weight:normal;font-style:normal;color:#000;">0</div>
<div class="t" style="right:267.5px;top:672.39px;line-height:37.6px;font-size:18.8px;font-weight:normal;font-style:normal;color:#000;">6,200.85</div>
<div class="t" style="right:158.5px;top:672.39px;line-height:37.6px;font-size:18.8px;font-weight:normal;font-style:normal;color:#000;">1.15</div>
<div class="t" style="right:6.5px;top:672.39px;line-height:37.6px;font-size:18.8px;font-weight:normal;font-style:normal;color:#000;">6,202.00</div>
<svg style="position:absolute;left:722px;top:472px" width="206" height="32" viewBox="0 0 206 32">
<g stroke="#ef9a33" stroke-width="2" fill="none">
<path d="M0 1 H206" stroke-dasharray="6 4"/><path d="M0 30.5 H206" stroke-dasharray="6 4"/>
<path d="M1 0 V32" stroke-dasharray="6 4"/>
</g></svg>
<div style="position:absolute;left:926px;top:472px;width:107px;height:28px;background:#fff;border:2px solid #1b6ad4;border-right-width:3px;"></div>
<div class="t" style="left:932.6px;top:473.26px;line-height:30.8px;font-size:15.4px;font-weight:normal;font-style:normal;color:#000;"><span style="display:inline-block;width:8.93px;text-align:center;color:#222">=</span><span style="display:inline-block;width:8.93px;text-align:center;color:#e58c2c;transform:scaleX(0.92)">E</span><span style="display:inline-block;width:8.93px;text-align:center;color:#e58c2c">1</span><span style="display:inline-block;width:8.93px;text-align:center;color:#e58c2c">7</span><span style="display:inline-block;width:8.93px;text-align:center;color:#e58c2c">9</span><span style="display:inline-block;width:8.93px;text-align:center;color:#000;font-weight:bold;font-size:19px;position:relative;top:3px">*</span><span style="display:inline-block;width:8.93px;text-align:center;color:#8d45ae">$</span><span style="display:inline-block;width:8.93px;text-align:center;color:#8d45ae;transform:scaleX(0.86)">D</span><span style="display:inline-block;width:8.93px;text-align:center;color:#8d45ae">$</span><span style="display:inline-block;width:8.93px;text-align:center;color:#8d45ae">6</span></div>
<svg style="position:absolute;left:920px;top:422px" width="100" height="60" viewBox="0 0 100 60">
<defs><filter id="sh" x="-20%" y="-20%" width="140%" height="160%"><feGaussianBlur in="SourceAlpha" stdDeviation="1.3"/><feOffset dx="0" dy="1.2" result="b"/>
<feComponentTransfer><feFuncA type="linear" slope="0.45"/></feComponentTransfer><feMerge><feMergeNode/><feMergeNode in="SourceGraphic"/></feMerge></filter></defs>
<path filter="url(#sh)" d="M8 5.8 H87 a2.5 2.5 0 0 1 2.5 2.5 V41.5 a2.5 2.5 0 0 1 -2.5 2.5 H28.5 L17.5 53 L8 44 a2.5 2.5 0 0 1 -2.5 -2.5 V8.3 a2.5 2.5 0 0 1 2.5 -2.5 Z" fill="#fff"/>
</svg>
<div class="t" style="left:936.3px;top:428.43px;line-height:35.6px;font-size:17.8px;font-weight:normal;font-style:normal;color:#000;"><span style="display:inline-block;width:10.75px;text-align:center;color:#3062c8">1</span><span style="display:inline-block;width:10.75px;text-align:center;color:#3062c8">.</span><span style="display:inline-block;width:10.75px;text-align:center;color:#3062c8">1</span><span style="display:inline-block;width:10.75px;text-align:center;color:#3062c8">5</span></div>
<svg style="position:absolute;left:985px;top:439px" width="16" height="16" viewBox="0 0 16 16">
<path d="M2.5 2.5 L13.5 13.5 M13.5 2.5 L2.5 13.5" stroke="#a0a0a0" stroke-width="1.7"/></svg>
</div></body></html>
